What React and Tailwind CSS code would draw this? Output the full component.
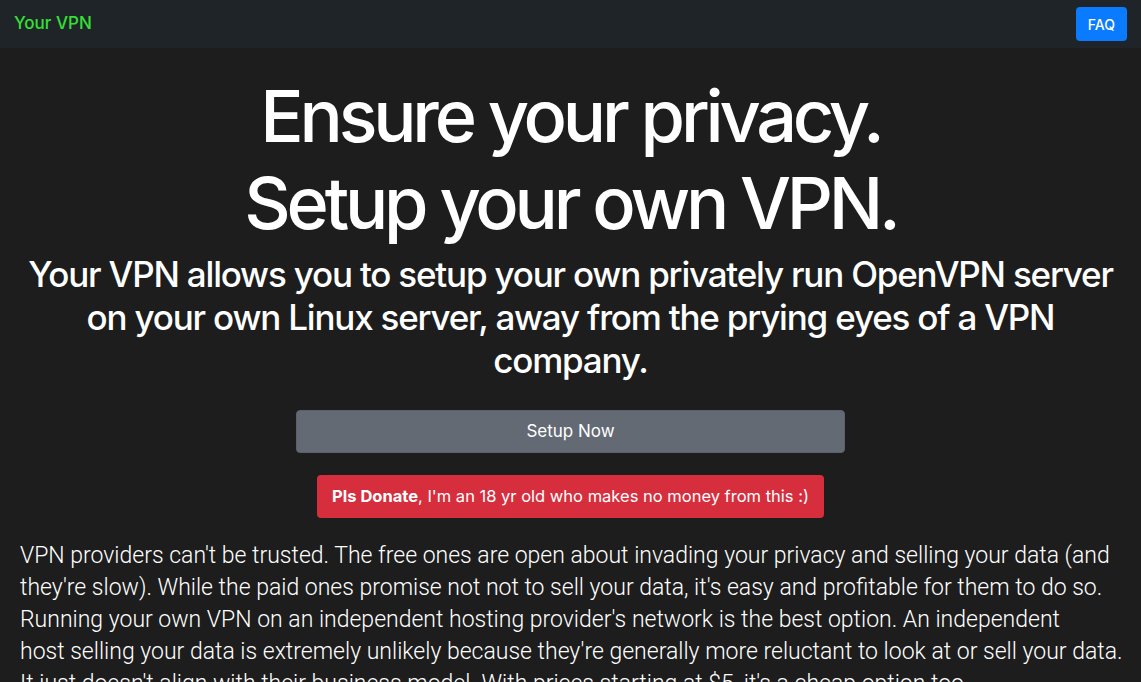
const App = () => {
  return (
    <div className="min-h-screen bg-[#1d1d1d] text-white" style={{ fontFamily: "Inter, 'Helvetica Neue', Arial, sans-serif" }}>
      {/* Navbar */}
      <nav className="flex h-12 items-center justify-between bg-[#1f2428] pl-[14px] pr-[14px]">
        <a href="#" className="text-[17px] font-medium text-[#35e036]">
          Your VPN
        </a>
        <button className="h-[34px] rounded-[4px] bg-[#0a7bff] px-3 text-[14px] font-medium text-white">
          FAQ
        </button>
      </nav>

      <main className="px-5 pt-6 text-center">
        <h1 className="text-[72px] font-medium leading-[87px] tracking-[-4.2px]">
          Ensure your privacy.
          <br />
          Setup your own VPN.
        </h1>

        <h2 className="mt-[7px] text-[35px] font-medium leading-[43px] tracking-[-1.2px]">
          Your VPN allows you to setup your own privately run OpenVPN server on your own Linux server, away from the prying
          eyes of a VPN company.
        </h2>

        <div className="mt-[28px] flex justify-center">
          <button className="h-[43px] w-[549px] rounded-[4px] border border-[#5a616a] bg-[#636a74] text-[17px] text-white">
            Setup Now
          </button>
        </div>

        <div className="mt-[22px] flex justify-center">
          <button className="h-[43px] w-[507px] rounded-[4px] bg-[#d72e3e] text-[16.5px] text-white">
            <span className="font-bold">Pls Donate</span>, I'm an 18 yr old who makes no money from this :)
          </button>
        </div>

        <p
          className="mt-[22px] whitespace-nowrap text-left text-[23px] font-light leading-[32px]"
          style={{ fontFamily: "Roboto, 'Liberation Sans', sans-serif" }}
        >
          VPN providers can't be trusted. The free ones are open about invading your privacy and selling your data (and
          <br />
          they're slow). While the paid ones promise not not to sell your data, it's easy and profitable for them to do so.
          <br />
          Running your own VPN on an independent hosting provider's network is the best option. An independent
          <br />
          host selling your data is extremely unlikely because they're generally more reluctant to look at or sell your data.
          <br />
          It just doesn't align with their business model. With prices starting at $5, it's a cheap option too.
        </p>
      </main>
    </div>
  );
};

export default App;
